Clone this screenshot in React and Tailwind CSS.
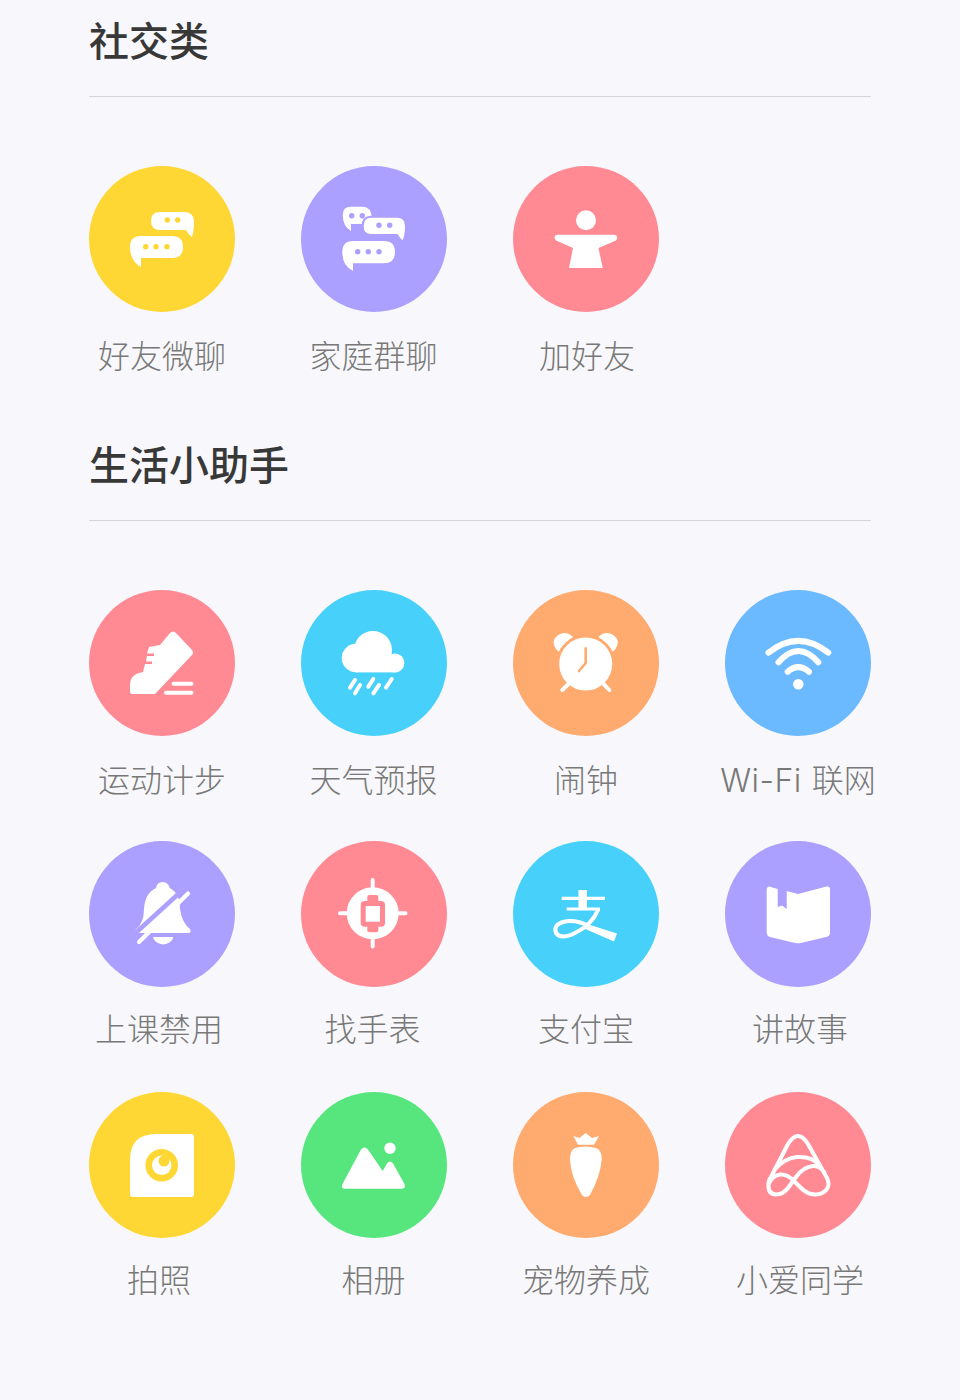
const W = "#ffffff";
const YELLOW = "#ffd735", PURPLE = "#ab9fff", PINK = "#ff8a94", CYAN = "#47d1fa", ORANGE = "#ffaa6e", BLUE = "#6bb9ff", GREEN = "#57e67d";

function Dots({ pts, c, r = 2.7 }) {
  return pts.map(([x, y], i) => <circle key={i} cx={x} cy={y} r={r} fill={c} />);
}

const icons = {
  chat: (
    <>
      <path fill={W} d="M71 46H95Q105 46 105 55.5Q105 65 103 71Q99 68 97 64H71Q62 64 62 55Q62 46 71 46Z" />
      <path fill={W} d="M52 70H83Q94 70 94 81Q94 92 83 92H52V101Q41 95 41 81Q41 70 52 70Z" />
      <Dots c={YELLOW} pts={[[78.3, 54], [88.7, 54], [56.7, 80.7], [67, 80.7], [78, 80.7]]} />
    </>
  ),
  family: (
    <>
      <path fill={W} d="M50 40.7H62Q70 40.7 71 52Q71 58 62 58H50V65Q41.7 60 41.7 49Q41.7 40.7 50 40.7Z" />
      <Dots c={PURPLE} pts={[[50.7, 49.7], [61.3, 49.7]]} />
      <path fill={W} stroke={PURPLE} strokeWidth="2" d="M70 50.7H96Q105 50.7 105 60Q105 70 102 76Q98 73 96 69H70Q61.7 69 61.7 60Q61.7 50.7 70 50.7Z" />
      <path fill={W} d="M52 75H83Q94 75 94 86Q94 97.3 83 97.3H52V105Q41.3 100 41.3 86Q41.3 75 52 75Z" />
      <Dots c={PURPLE} pts={[[78, 59.3], [88.7, 59.3], [56.7, 85.7], [67.3, 85.7], [78, 85.7]]} />
    </>
  ),
  friend: (
    <>
      <circle cx="73" cy="54.3" r="10" fill={W} />
      <path fill={W} d="M44 68.7H101.5Q106 70 103 74.5L85.5 82L89.7 102H56L60 82L43 74.5Q39.5 70 44 68.7Z" />
    </>
  ),
  shoe: (
    <>
      <path fill={W} d="M81 43Q84 40 87 43L103 60Q105 63 103 65L66 104H43Q41 104 41 102V95Q41 84 54 82L56 74H63V71.5H57L58 66H65V63.5H58L60 57L71 55Z" />
      <path stroke={W} strokeWidth="4" strokeLinecap="round" d="M84.5 93.7H102.5M77 102.7H102.5" fill="none" />
    </>
  ),
  rain: (
    <>
      <circle cx="72" cy="60" r="19" fill={W} />
      <circle cx="55" cy="68" r="14.3" fill={W} />
      <circle cx="94" cy="73" r="9.4" fill={W} />
      <rect x="55" y="66" width="39" height="16.4" fill={W} />
      <path stroke={W} strokeWidth="4" strokeLinecap="round" fill="none" d="M49 97.7L54 90M54 103.3L59 95M67.3 96.7L72.3 89M72.3 103.3L78 95M85 97.7L90.7 89" />
    </>
  ),
  alarm: (
    <>
      <path fill={W} d="M60 47Q54 41 47 44Q39 48 41 55Q42 59 46 62Z" />
      <path fill={W} d="M85.4 47Q91.4 41 98.4 44Q106.4 48 104.4 55Q103.4 59 99.4 62Z" />
      <circle cx="72.7" cy="74" r="28" fill={W} stroke={ORANGE} strokeWidth="3" />
      <path stroke={W} strokeWidth="4" strokeLinecap="round" fill="none" d="M49.3 100L55.3 94.3M96.3 100L91 94.3" />
      <path stroke={ORANGE} strokeWidth="2.6" strokeLinecap="round" strokeLinejoin="round" fill="none" d="M72.7 58.3V73L66 81" />
    </>
  ),
  wifi: (
    <>
      <circle cx="73.3" cy="94.3" r="5.3" fill={W} />
      <path stroke={W} strokeWidth="6" strokeLinecap="round" fill="none" d="M43.5 62.7Q73.3 39 103.3 62.7M53.5 72.3Q73.3 49.7 93.3 72.3M62.7 81.7Q73.3 72.5 84 81.7" />
    </>
  ),
  bell: (
    <>
      <path fill={W} d="M73.7 41a7 7 0 0 1 7 6Q91 52 91 68Q93 82 101 88Q103 92 99 92H48Q45 92 47 88Q55 82 55 68Q56 52 67 47a7 7 0 0 1 6.7 -6Z" />
      <path fill={W} d="M64 96H84.3A10.3 9 0 0 1 64 96Z" />
      <path stroke={PURPLE} strokeWidth="4.5" fill="none" d="M46 92.5L97 46" />
      <path stroke={W} strokeWidth="4.2" strokeLinecap="round" fill="none" d="M50 101L99 52.5" />
    </>
  ),
  watch: (
    <>
      <circle cx="71.7" cy="72.3" r="26" fill={W} />
      <path stroke={W} strokeWidth="4" fill="none" strokeLinecap="round" d="M71.7 39V48M71.7 97V105.5M39 72.3H48M95.5 72.3H104.5" />
      <rect x="66.3" y="54" width="11" height="37.3" rx="2" fill={PINK} />
      <rect x="59.7" y="60" width="24.3" height="25.7" rx="4" fill={PINK} />
      <rect x="64.7" y="65" width="14.3" height="15.7" fill={W} />
    </>
  ),
  alipay: (
    <>
      <path stroke={W} strokeWidth="8.5" fill="none" d="M69.7 49V68" />
      <path stroke={W} strokeWidth="3.2" fill="none" d="M48.7 57.3H92M53.7 68H87" />
      <path stroke={W} strokeWidth="4" fill="none" d="M85.5 68Q79 84 62 92Q48 99 43 92Q40 84 50 81Q62 78 76 85" />
      <path fill={W} d="M74 83L104 92.5L101 100.5L70 87Z" />
    </>
  ),
  book: (
    <path fill={W} d="M44 45.5Q41.7 46 41.7 48V92Q42 95 45 96L70 102Q73 102.5 76 102L101 96Q105 95 105 92V48Q105 45 101.5 45.5L73 53L61.7 50V68L57 64.5L52.7 66V48Z" />
  ),
  photo: (
    <>
      <path fill={W} d="M41 68Q41 42 67 42H102a3 3 0 0 1 3 3V102a3 3 0 0 1 -3 3H44a3 3 0 0 1 -3 -3Z" />
      <circle cx="72.7" cy="73.3" r="16.3" fill={YELLOW} />
      <circle cx="72.7" cy="73.3" r="9.7" fill={W} />
      <circle cx="75" cy="69" r="5.5" fill={YELLOW} />
    </>
  ),
  album: (
    <g transform="translate(-1 0)">
      <circle cx="90" cy="56.3" r="5.7" fill={W} />
      <path fill={W} d="M61 57.5Q64.3 53.5 68 57.5L82.7 79L87 71.5Q90 67.5 93 71.5L104.5 92Q106 96.5 102 96.7H44.5Q40.5 96.5 42.5 92Z" />
    </g>
  ),
  carrot: (
    <>
      <path fill={W} d="M62 56Q72.7 53 83 56Q89 58 88.7 68Q87 85 77 103Q72.7 107 69 103Q58 85 57 68Q57 58 62 56Z" />
      <path fill={W} d="M60.3 44L66.5 46L72.7 41L79 46L86 44L81 52.7H65Z" />
    </>
  ),
  xiaoai: (
    <>
      <path stroke={W} strokeWidth="4" fill="none" strokeLinejoin="round" d="M43.5 93Q43 89 46 85L63 52Q73 36 83 52L102 86Q105 92 102 97Q97 103 90 102.5Q82 102 76 96L68 88Q62 82 55 82.5Q46 84 43.5 93Q43 102 51 102.5Q58 102.5 63 96L71 85Q78 75 88 74Q95 73.5 100 81" />
      <path stroke={W} strokeWidth="4" fill="none" d="M49 78Q60 66 72 65Q87 64 94 73" />
    </>
  ),
};

function Item({ label, color, icon, row = "tall", shift = "" }) {
  const rowClass = row === "tall" ? "mt-[20px] mb-[2px]" : "mt-[18px] mb-[4px]";
  return (
    <div className="flex flex-col items-center w-[146px]">
      <div className="w-[146px] h-[146px] rounded-full" style={{ backgroundColor: color }}>
        <svg viewBox="0 0 146 146" width="146" height="146">{icons[icon]}</svg>
      </div>
      <div className={`${rowClass} ${shift} h-[44px] leading-[44px] text-[32px] font-light text-[#787878] whitespace-nowrap`}>
        {label}
      </div>
    </div>
  );
}

function Section({ title, className, children }) {
  return (
    <section className={className}>
      <h2 className="h-[56px] leading-[56px] text-[40px] font-medium text-[#383838]">{title}</h2>
      <div className="mt-[29px] h-px bg-[#d5d5da]" />
      {children}
    </section>
  );
}

const wifiLabel = (
  <>
    <span className="font-['Inter',sans-serif] font-light tracking-[0.5px]">Wi-Fi</span>
    <span className="ml-[10px]">联网</span>
  </>
);

export default function App() {
  return (
    <div className="min-h-[1400px] bg-[#f8f8fc] px-[89px] pt-[11px] font-['Noto_Sans_CJK_SC',sans-serif]">
      <Section title="社交类">
        <div className="mt-[69px] grid grid-cols-[211.5px_212.5px_212px_146px]">
          <Item label="好友微聊" color={YELLOW} icon="chat" />
          <Item label="家庭群聊" color={PURPLE} icon="family" />
          <Item label="加好友" color={PINK} icon="friend" shift="ml-[2px]" />
        </div>
      </Section>
      <Section title="生活小助手" className="mt-[57px]">
        <div className="mt-[69px] grid grid-cols-[211.5px_212.5px_212px_146px] gap-y-[39px]">
          <Item label="运动计步" color={PINK} icon="shoe" />
          <Item label="天气预报" color={CYAN} icon="rain" />
          <Item label="闹钟" color={ORANGE} icon="alarm" />
          <Item label={wifiLabel} color={BLUE} icon="wifi" />
          <Item label="上课禁用" color={PURPLE} icon="bell" row="short" shift="mr-[6px]" />
          <Item label="找手表" color={PINK} icon="watch" row="short" shift="mr-[2px]" />
          <Item label="支付宝" color={CYAN} icon="alipay" row="short" />
          <Item label="讲故事" color={PURPLE} icon="book" row="short" shift="ml-[4px]" />
          <Item label="拍照" color={YELLOW} icon="photo" row="short" shift="mr-[6px]" />
          <Item label="相册" color={GREEN} icon="album" row="short" />
          <Item label="宠物养成" color={ORANGE} icon="carrot" row="short" />
          <Item label="小爱同学" color={PINK} icon="xiaoai" row="short" shift="ml-[4px]" />
        </div>
      </Section>
    </div>
  );
}
